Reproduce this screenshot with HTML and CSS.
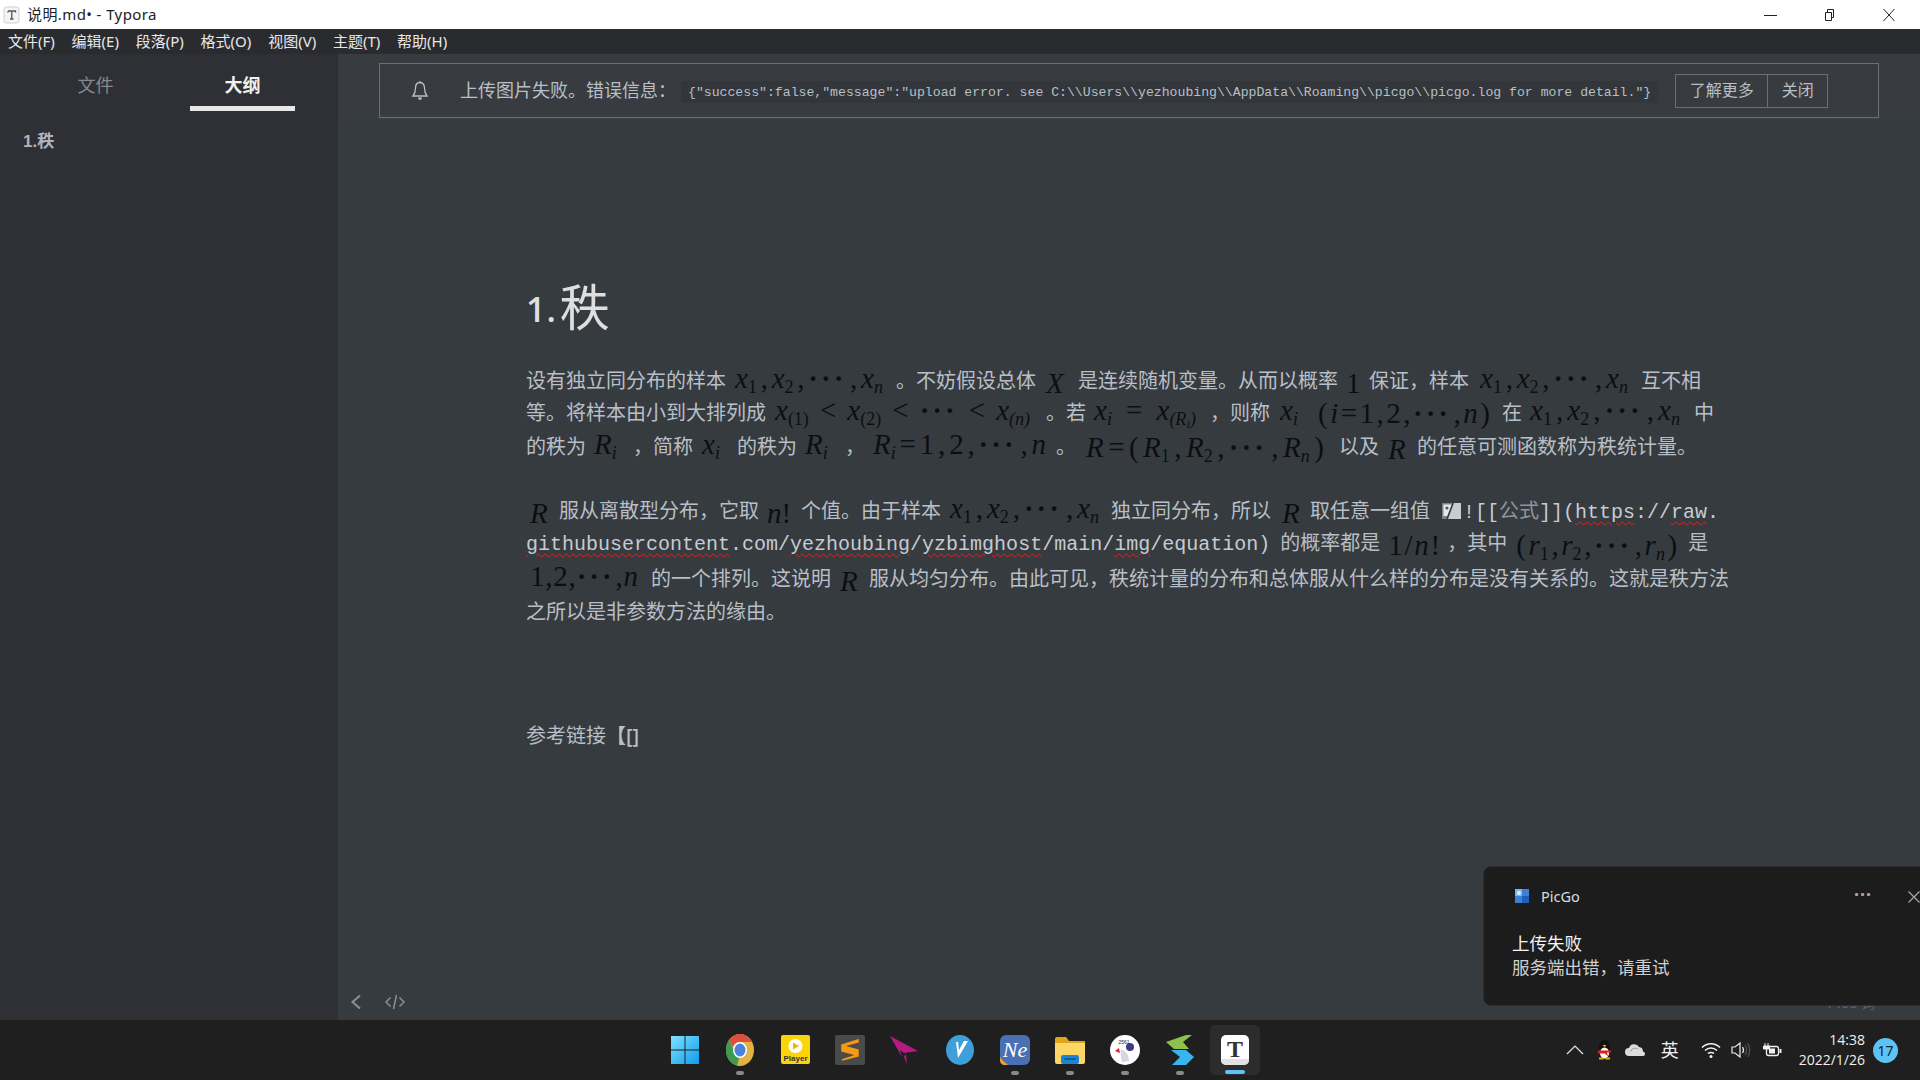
FILE: index.html
```html
<!DOCTYPE html>
<html lang="zh-CN">
<head>
<meta charset="utf-8">
<title>说明.md• - Typora</title>
<link rel="stylesheet" href="styles.css">
</head>
<body>
<div class="screen">
  <header class="titlebar">
    <svg class="appicon" width="18" height="18" viewBox="0 0 18 18"><rect x="1" y="1" width="15" height="16" rx="2.5" fill="#f4f4f4" stroke="#cfcfcf"/><path d="M5 5h7.5v1.5M8.8 5v8M7 13h3.5M5 6.500V5" fill="none" stroke="#555" stroke-width="1.300"/></svg>
    <span class="wintitle">说明.md• - Typora</span>
    <div class="winctl">
      <span class="ctl"><svg width="14" height="12" viewBox="0 0 14 12"><path d="M0 6.500h13" stroke="#222" stroke-width="1"/></svg></span>
      <span class="ctl ctl-max"><svg width="14" height="12" viewBox="0 0 14 12"><path d="M3.500 3.500h6v8h-6zM5.500 3.500V.5h6v8h-2" fill="none" stroke="#222" stroke-width="1"/></svg></span>
      <span class="ctl ctl-close"><svg width="14" height="12" viewBox="0 0 14 12"><path d="M1.500 0l11 12M12.500 0l-11 12" stroke="#222" stroke-width="1"/></svg></span>
    </div>
  </header>
  <nav class="menubar">
    <span>文件(F)</span><span>编辑(E)</span><span>段落(P)</span><span>格式(O)</span><span>视图(V)</span><span>主题(T)</span><span>帮助(H)</span>
  </nav>
  <div class="app">
    <aside class="sidebar">
      <div class="tabs"><span class="tab">文件</span><span class="tab tab-on">大纲</span></div>
      <div class="outline">1.秩</div>
    </aside>
    <main class="main">
      <div class="noticebar">
        <div class="notice">
          <svg class="bell" width="18" height="22" viewBox="0 0 18 22"><path d="M9 2.500c-3.500 0-4.500 3-4.500 5.500 0 4-1 6-2.500 8h14c-1.500-2-2.500-4-2.500-8 0-2.500-1-5.500-4.500-5.500zM9 1v1.500" fill="none" stroke="#b8bfc6" stroke-width="1.300"/><path d="M7 17.500h4c0 1.500-1 2.500-2 2.500s-2-1-2-2.500z" fill="#b8bfc6"/></svg>
          <span class="noticetext">上传图片失败。错误信息&#xFF1A;</span>
          <code class="noticecode">{"success":false,"message":"upload error. see C:\\Users\\yezhoubing\\AppData\\Roaming\\picgo\\picgo.log for more detail."}</code>
          <div class="btns"><span class="btn btn-more">了解更多</span><span class="btn btn-close">关闭</span></div>
        </div>
      </div>
      <article class="doc">
        <h1 class="h1"><span class="h1-num">1.</span><span class="h1-cjk">秩</span></h1>

        <div class="line h32">
          <span>设有独立同分布的样本</span>
          <span class="m g9 w148"><i>x<sub class="u">1</sub></i><span>,</span><i>x<sub class="u">2</sub></i><span>,</span><span class="dots">···</span><span>,</span><i>x<sub>n</sub></i></span>
          <span class="g13">。不妨假设总体</span>
          <span class="m g10 w19 drop"><i>X</i></span>
          <span class="g13">是连续随机变量。从而以概率</span>
          <span class="m g8 w13 drop"><span>1</span></span>
          <span class="g10">保证&#xFF0C;样本</span>
          <span class="m g11 w148"><i>x<sub class="u">1</sub></i><span>,</span><i>x<sub class="u">2</sub></i><span>,</span><span class="dots">···</span><span>,</span><i>x<sub>n</sub></i></span>
          <span class="g13">互不相</span>
        </div>
        <div class="line h33">
          <span>等。将样本由小到大排列成</span>
          <span class="m g9 w255"><i>x<sub class="u">(1)</sub></i><span>&lt;</span><i>x<sub class="u">(2)</sub></i><span>&lt;</span><span class="dots">···</span><span>&lt;</span><i>x<sub>(n)</sub></i></span>
          <span class="g16">。若</span>
          <span class="m g8 w102"><i>x<sub>i</sub></i><span>=</span><i>x<sub>(R<sub class="s2">i</sub>)</sub></i></span>
          <span class="g14">&#xFF0C;则称</span>
          <span class="m g10 w20"><i>x<sub>i</sub></i></span>
          <span class="m g18 w172 drop3"><span>(</span><i>i</i><span>=</span><span>1</span><span>,</span><span>2</span><span>,</span><span class="dots">···</span><span>,</span><i>n</i><span>)</span></span>
          <span class="g12">在</span>
          <span class="m g8 w150"><i>x<sub class="u">1</sub></i><span>,</span><i>x<sub class="u">2</sub></i><span>,</span><span class="dots">···</span><span>,</span><i>x<sub>n</sub></i></span>
          <span class="g14">中</span>
        </div>
        <div class="line h34">
          <span>的秩为</span>
          <span class="m g8 w27"><i>R<sub>i</sub></i></span>
          <span class="g12">&#xFF0C;简称</span>
          <span class="m g9 w21"><i>x<sub>i</sub></i></span>
          <span class="g14">的秩为</span>
          <span class="m g8 w26"><i>R<sub>i</sub></i></span>
          <span class="g14">&#xFF0C;</span>
          <span class="m g8 w173"><i>R<sub>i</sub></i><span>=</span><span>1</span><span>,</span><span>2</span><span>,</span><span class="dots">···</span><span>,</span><i>n</i></span>
          <span class="g10">。</span>
          <span class="m g10 w238 drop3"><i>R</i><span>=</span><span>(</span><i>R<sub class="u">1</sub></i><span>,</span><i>R<sub class="u">2</sub></i><span>,</span><span class="dots">···</span><span>,</span><i>R<sub>n</sub></i><span>)</span></span>
          <span class="g15">以及</span>
          <span class="m g9 w18 drop"><i>R</i></span>
          <span class="g11">的任意可测函数称为秩统计量。</span>
        </div>

        <div class="line h32 para">
          <span class="m g4 w19 drop"><i>R</i></span>
          <span class="g10">服从离散型分布&#xFF0C;它取</span>
          <span class="m g8 w22 drop"><i>n</i><span>!</span></span>
          <span class="g12">个值。由于样本</span>
          <span class="m g9 w149"><i>x<sub class="u">1</sub></i><span>,</span><i>x<sub class="u">2</sub></i><span>,</span><span class="dots">···</span><span>,</span><i>x<sub>n</sub></i></span>
          <span class="g12">独立同分布&#xFF0C;所以</span>
          <span class="m g11 w18 drop"><i>R</i></span>
          <span class="g10">取任意一组值</span>
          <svg class="g12 broken" width="19" height="16" viewBox="0 0 19 16"><path d="M0 0h19v16H0z" fill="#c9cdd1"/><path d="M12 0L6 16h-6V0z" fill="#7e8388"/><path d="M1.500 1.500h9L6 13H1.500z" fill="#e6e8ea"/><circle cx="5" cy="5" r="1.600" fill="#555"/><path d="M11 0L5 16" stroke="#363b40" stroke-width="1.500"/></svg>
          <span class="code g2">![[<span class="dim">公式</span>]](<span class="err">https</span>://<span class="err">raw</span>.</span>
        </div>
        <div class="line h31">
          <span class="code"><span class="err">githubusercontent</span>.com/<span class="err">yezhoubing</span>/<span class="err">yzbimghost</span>/main/<span class="err">img</span>/equation)</span>
          <span class="g10">的概率都是</span>
          <span class="m g8 w52 drop"><span>1</span><span>/</span><i>n</i><span>!</span></span>
          <span class="g7">&#xFF0C;其中</span>
          <span class="m g9 w161 drop"><span>(</span><i>r<sub class="u">1</sub></i><span>,</span><i>r<sub class="u">2</sub></i><span>,</span><span class="dots">···</span><span>,</span><i>r<sub>n</sub></i><span>)</span></span>
          <span class="g11">是</span>
        </div>
        <div class="line h42">
          <span class="m g4 w108"><span>1</span><span>,</span><span>2</span><span>,</span><span class="dots">···</span><span>,</span><i>n</i></span>
          <span class="g13">的一个排列。这说明</span>
          <span class="m g9 w20 drop"><i>R</i></span>
          <span class="g9">服从均匀分布。由此可见&#xFF0C;秩统计量的分布和总体服从什么样的分布是没有关系的。这就是秩方法</span>
        </div>
        <div class="line h24"><span>之所以是非参数方法的缘由。</span></div>

        <div class="line h32 refs"><span>参考链接</span><span class="cjkbr">【</span><span class="brackets">[]</span></div>
      </article>
      <footer class="statusbar">
        <svg width="14" height="16" viewBox="0 0 14 16"><path d="M11 1.500L3.500 8l7.500 6.500" fill="none" stroke="#8c9095" stroke-width="2"/></svg>
        <svg class="src" width="20" height="16" viewBox="0 0 20 16"><path d="M5.500 3.500L1 8l4.500 4.500M14.500 3.500L19 8l-4.500 4.500M11.500 1L8.500 15" fill="none" stroke="#8c9095" stroke-width="1.500"/></svg>
        <span class="count">1408 词</span>
      </footer>
    </main>
  </div>
  <div class="taskbar">
    <div class="tb-left"></div>
    <div class="tb-apps">
      <span class="tile"><svg width="30" height="30" viewBox="0 0 30 30"><defs><linearGradient id="wg" x1="0" y1="0" x2="1" y2="1"><stop offset="0" stop-color="#7fe3fb"/><stop offset="1" stop-color="#0f9bf0"/></linearGradient></defs><path fill="url(#wg)" d="M1 1h13.500v13.500H1zM15.500 1H29v13.500H15.500zM1 15.500h13.500V29H1zM15.500 15.500H29V29H15.500z"/></svg></span>
      <span class="tile run"><svg width="28" height="32" viewBox="0 0 28 32"><ellipse cx="14" cy="16" rx="14" ry="16" fill="#e3b341"/><path d="M14 0c5 0 10 3 12.500 8H14c-3.500 0-6 2-7 5L3 6c2.500-3.500 6.500-6 11-6z" fill="#d9503f"/><path d="M3 6l5.500 11c1 2.500 3 4 5.500 4l-3 10.500C4.500 30 0 24 0 16c0-4 1-7.500 3-10z" fill="#3c9a52"/><ellipse cx="14" cy="16" rx="7" ry="8" fill="#fff"/><ellipse cx="14" cy="16" rx="5.500" ry="6.500" fill="#4b82e0"/></svg></span>
      <span class="tile"><svg width="29" height="29" viewBox="0 0 29 29"><rect width="29" height="29" rx="2" fill="#fcd40a"/><circle cx="14.500" cy="11" r="7" fill="#fff"/><path d="M12 7.500l6 3.500-6 3.500z" fill="#f2b600"/><text x="14.500" y="26" font-size="8" font-weight="700" text-anchor="middle" fill="#333" font-family="Liberation Sans">Player</text></svg></span>
      <span class="tile"><svg width="30" height="30" viewBox="0 0 30 30"><rect width="30" height="30" rx="2" fill="#4a4a4a"/><path d="M23 5L7 10v6l15 4-15 5 16-4v-6L8 11l15-4z" fill="#f89a10" stroke="#f89a10" stroke-width="1.500"/></svg></span>
      <span class="tile"><svg width="30" height="30" viewBox="0 0 30 30"><path d="M0 1l28 15-14 2-4-3 2 7z" fill="#b61a7f"/><path d="M14 22l2-3 1 10z" fill="#b61a7f"/></svg></span>
      <span class="tile"><svg width="28" height="30" viewBox="0 0 28 30"><ellipse cx="14" cy="15" rx="14" ry="15" fill="#3e9fd9"/><path d="M10 7l2 16 10-17h-4l-5 9-1-8z" fill="#fff"/></svg></span>
      <span class="tile run"><svg width="30" height="30" viewBox="0 0 30 30"><rect width="30" height="30" rx="6" fill="#4a6fb2"/><path d="M0 22c2 3 5 6 8 8H5c-3 0-5-2-5-5z" fill="#f0a040"/><text x="15" y="22" font-size="22" font-style="italic" text-anchor="middle" fill="#fff" font-family="Liberation Serif">Ne</text></svg></span>
      <span class="tile run"><svg width="30" height="28" viewBox="0 0 30 28"><path d="M0 3a2 2 0 012-2h9l3 4h16v6H0z" fill="#e0a617"/><path d="M0 7h30v19a2 2 0 01-2 2H2a2 2 0 01-2-2z" fill="#fcd765"/><rect x="6" y="19" width="18" height="9" rx="2" fill="#1b86d4"/><path d="M9 23h12" stroke="#0d4f8a" stroke-width="1.500"/></svg></span>
      <span class="tile run"><svg width="30" height="30" viewBox="0 0 30 30"><ellipse cx="15" cy="15" rx="15" ry="15" fill="#fff"/><text x="14" y="9" font-size="5" text-anchor="middle" fill="#222" font-family="Liberation Sans">2561</text><circle cx="20" cy="12" r="4" fill="#3c3c82"/><path d="M5 16l4-3 1 5z" fill="#d22"/><path d="M11 14c3 2 8 4 8 12l-7 1c-1-5-2-8-1-13z" fill="#d6d6e4"/></svg></span>
      <span class="tile run"><svg width="28" height="30" viewBox="0 0 28 30"><path d="M20 0h6l-9 7 6 7H8L0 7z" fill="#8fc04e"/><path d="M5 15h15l8 7-8 8H6l8-8z" fill="#38b4ef"/></svg></span>
      <span class="tile tile-on"><svg width="28" height="30" viewBox="0 0 28 30"><rect width="28" height="30" rx="5" fill="#fff"/><path d="M0 24h28v1a5 5 0 01-5 5H5a5 5 0 01-5-5z" fill="#e2e2e2"/><text x="14" y="22" font-size="24" font-weight="700" text-anchor="middle" fill="#333" font-family="Liberation Serif">T</text></svg></span>
    </div>
    <div class="tray">
      <svg width="18" height="10" viewBox="0 0 18 10"><path d="M1 9l8-8 8 8" fill="none" stroke="#e8e8e8" stroke-width="1.200"/></svg>
      <svg class="t-qq" width="15" height="20" viewBox="0 0 15 20"><ellipse cx="7.500" cy="7" rx="5.500" ry="7" fill="#111"/><ellipse cx="7.500" cy="13" rx="4.500" ry="5.500" fill="#fff"/><path d="M1 10.500h13v2H10l1 4-3-3H1z" fill="#e01d1d"/><path d="M5.500 5.500l2 1.500 2-1.500-2-.8z" fill="#f2a900"/><path d="M2 18.500h4.500M8.500 18.500H13" stroke="#f2a900" stroke-width="1.800"/></svg>
      <svg class="t-cloud" width="20" height="12" viewBox="0 0 20 12"><path d="M4 12a4 4 0 010-8 5.500 5.500 0 0110-1 4.500 4.500 0 014 4.500A2.500 2.500 0 0120 10c0 1-.8 2-2 2z" fill="#dcdcdc"/><path d="M6 7.500a4 4 0 017-2" stroke="#9a9a9a" fill="none"/></svg>
      <span class="ime">英</span>
      <svg class="t-wifi" width="20" height="16" viewBox="0 0 20 16"><path d="M1 5.500c5-5 13-5 18 0M4 8.500c3.500-3.500 8.500-3.500 12 0M7 11.500c1.500-1.500 4.500-1.500 6 0" fill="none" stroke="#f0f0f0" stroke-width="1.500"/><circle cx="10" cy="14.500" r="1.500" fill="#f0f0f0"/></svg>
      <svg class="t-vol" width="20" height="18" viewBox="0 0 20 18"><path d="M1 6h3l5-4v14l-5-4H1z" fill="none" stroke="#ececec" stroke-width="1.200"/><path d="M11.500 6c1.200 1.800 1.200 4.200 0 6" fill="none" stroke="#ececec" stroke-width="1.200"/><path d="M14 4c2 3 2 7 0 10M16.500 2c3 4 3 10 0 14" fill="none" stroke="#555" stroke-width="1.200"/></svg>
      <svg class="t-bat" width="20" height="14" viewBox="0 0 20 14"><path d="M3 0v3M6 0v3M1.500 3h6v3h-6zM4.500 6v2" fill="#f0f0f0" stroke="#f0f0f0" stroke-width="1"/><rect x="4.500" y="3.500" width="12" height="9" rx="2" fill="none" stroke="#f0f0f0" stroke-width="1.300"/><rect x="7" y="5.500" width="6" height="5" fill="#f0f0f0"/><rect x="17.500" y="6" width="2" height="4" fill="#f0f0f0"/></svg>
      <div class="clock"><span>14:38</span><span>2022/1/26</span></div>
      <span class="badge">17</span>
    </div>
  </div>
  <aside class="toast">
    <div class="toast-head">
      <svg width="14" height="14" viewBox="0 0 14 14"><rect width="14" height="14" fill="#3f7fd6"/><path d="M0 0h7v7H0z" fill="#7ab6f2"/><path d="M7 7h7v7H7z" fill="#1f5fb8"/><circle cx="4" cy="4" r="2" fill="#dcefff"/></svg>
      <span class="toast-app">PicGo</span>
      <span class="toast-more">···</span>
      <svg class="toast-x" width="12" height="12" viewBox="0 0 12 12"><path d="M.5.500l11 11M11.500.500l-11 11" stroke="#a8a8a8" stroke-width="1.200"/></svg>
    </div>
    <div class="toast-title">上传失败</div>
    <div class="toast-body">服务端出错&#xFF0C;请重试</div>
  </aside>
</div>
</body>
</html>
```
FILE: styles.css
```css
* { box-sizing: border-box; }
html, body { margin: 0; padding: 0; }
body { font-family: "Noto Sans", "Noto Sans CJK SC", sans-serif; background: #363b40; overflow: hidden; }
.screen { position: relative; width: 1920px; height: 1080px; display: flex; flex-direction: column; overflow: hidden; }

/* title bar */
.titlebar { height: 29px; background: #fff; display: flex; align-items: center; padding-left: 3px; color: #222; }
.appicon { flex: none; }
.wintitle { margin-left: 6px; font-size: 15px; letter-spacing: .4px; line-height: 29px; white-space: nowrap; }
.winctl { margin-left: auto; display: flex; height: 29px; }
.ctl { width: 58px; display: flex; align-items: center; justify-content: center; }
.ctl-max { width: 57px; }
.ctl-close { width: 63px; }

/* menu bar */
.menubar { height: 25px; background: #2a2b2f; display: flex; align-items: center; gap: 16.800px; padding-left: 8px; font-size: 15px; color: #e8e8e8; line-height: 25px; }

.app { flex: 1; display: flex; min-height: 0; }

/* sidebar */
.sidebar { width: 338px; flex: none; background: #2e3035; }
.tabs { display: flex; gap: 42px; padding-left: 43px; height: 57px; }
.tab { width: 105px; text-align: center; font-size: 18px; line-height: 63px; height: 57px; color: #85898e; }
.tab-on { color: #f0f0f0; font-weight: 700; border-bottom: 5px solid #e8e8e8; }
.outline { padding-left: 23px; margin-top: 19px; font-size: 17px; line-height: 24px; font-weight: 700; color: #b0b5bb; font-family: "Liberation Sans", "Noto Sans CJK SC", sans-serif; }

/* main */
.main { flex: 1; min-width: 0; display: flex; flex-direction: column; background: #363b40; }
.noticebar { height: 65px; padding: 9px 41px 0 41px; background: #383c41; border-bottom: 1px solid #3b4045; }
.notice { height: 55px; border: 1px solid #6c7076; display: flex; align-items: center; padding-left: 31px; }
.bell { flex: none; }
.noticetext { margin-left: 31px; margin-bottom: 4px; font-size: 18px; color: #b8bfc6; white-space: nowrap; width: 216px; }
.noticecode { margin-left: 5px; margin-top: 2px; height: 22px; padding: 1px 7px 0; background: #33373c; font-family: "Liberation Mono", monospace; font-size: 13.170px; line-height: 22px; color: #b8bfc6; white-space: nowrap; }
.btns { display: flex; margin-left: 17px; margin-top: 1px; }
.btn { height: 34px; border: 1px solid #6c7076; font-size: 16px; line-height: 31px; color: #b8bfc6; text-align: center; }
.btn-more { width: 93px; }
.btn-close { width: 61px; margin-left: -1px; }

/* document */
.doc { flex: 1; padding: 158px 0 0 188px; min-height: 0; color: #b8bfc6; font-size: 20px; font-family: "Open Sans", "Noto Sans CJK SC", sans-serif; white-space: nowrap; }
.h1 { margin: 0 0 28px; height: 60px; display: flex; align-items: baseline; line-height: 60px; font-weight: 400; color: #dedede; }
.h1-num { font-size: 34px; font-weight: 600; letter-spacing: 1px; transform: translateY(-4px); }
.h1-cjk { margin-left: 3px; font-size: 50px; font-weight: 400; }
.line { display: flex; align-items: baseline; }
.h24 { height: 24px; line-height: 24px; }
.h31 { height: 31px; line-height: 31px; }
.h32 { height: 32px; line-height: 32px; }
.h33 { height: 33px; line-height: 32px; }
.h34 { height: 34px; line-height: 34px; }
.h42 { height: 42px; line-height: 42px; }
.para { margin-top: 31px; }
.refs { margin-top: 96px; }
.cjkbr { font-weight: 700; }
.brackets { font-weight: 600; }

/* math */
.m { display: flex; justify-content: space-between; align-items: baseline; line-height: 0; font-family: "Liberation Serif", serif; font-size: 29px; color: #0c0e10; flex: none; }
.m i { font-style: italic; }
.m sub { font-size: 18px; vertical-align: -5px; line-height: 0; }
.m sub.u { font-style: normal; }
.m sub.s2 { font-size: 13px; vertical-align: -3px; }
.dots { letter-spacing: 3px; font-weight: 700; }
.drop { transform: translateY(5px); }
.drop3 { transform: translateY(3px); }
.g2 { margin-left: 2px; } .g4 { margin-left: 4px; } .g7 { margin-left: 7px; } .g8 { margin-left: 8px; }
.g9 { margin-left: 9px; } .g10 { margin-left: 10px; } .g11 { margin-left: 11px; } .g12 { margin-left: 12px; }
.g13 { margin-left: 13px; } .g14 { margin-left: 14px; } .g15 { margin-left: 15px; } .g16 { margin-left: 16px; } .g18 { margin-left: 18px; }
.w13 { width: 13px; } .w18 { width: 18px; } .w19 { width: 19px; } .w20 { width: 20px; } .w21 { width: 21px; } .w22 { width: 22px; }
.w26 { width: 26px; } .w27 { width: 27px; } .w52 { width: 52px; } .w102 { width: 102px; } .w108 { width: 108px; } .w148 { width: 148px; }
.w149 { width: 149px; } .w150 { width: 150px; } .w161 { width: 161px; } .w172 { width: 172px; } .w173 { width: 173px; } .w238 { width: 238px; } .w255 { width: 255px; }
.broken { flex: none; align-self: center; }
.code { font-family: "Liberation Mono", "Noto Sans CJK SC", monospace; color: #c6cbd0; }
.dim { color: #8f959b; }
.err { text-decoration: underline wavy #e02020 1px; text-underline-offset: 3px; }

/* status bar */
.statusbar { height: 36px; flex: none; display: flex; align-items: center; padding-left: 11px; }
.src { margin-left: 22px; }
.count { margin-left: auto; margin-right: 45px; font-size: 14px; color: #5f646a; }

/* taskbar */
.taskbar { height: 60px; flex: none; background: #1f1f1f; display: grid; grid-template-columns: 1fr auto 1fr; align-items: center; }
.tb-apps { display: flex; height: 60px; align-items: center; }
.tile { position: relative; width: 55px; height: 50px; margin-top: -1px; display: flex; align-items: center; justify-content: center; border-radius: 5px; }
.tile svg { display: block; }
.run::after, .tile-on::after { content: ""; position: absolute; left: 50%; bottom: 0; width: 8px; height: 4px; margin-left: -4px; border-radius: 2px; background: #8a8a8a; }
.tile-on { background: #2c2c2c; width: 50px; margin: -1px 3px 0 2px; }
.tile-on::after { width: 20px; margin-left: -10px; background: #5cc4f5; bottom: 1px; }
.tray { display: flex; align-items: center; justify-content: flex-end; padding-right: 22px; color: #f0f0f0; }
.t-qq { margin-left: 13px; }
.t-cloud { margin-left: 13px; }
.ime { margin-left: 16px; font-size: 18px; line-height: 24px; }
.t-wifi { margin-left: 22px; }
.t-vol { margin-left: 10px; }
.t-bat { margin-left: 11px; }
.clock { margin-left: 17px; display: flex; flex-direction: column; align-items: flex-end; font-size: 14px; line-height: 20px; color: #f0f0f0; font-family: "Open Sans", sans-serif; }
.badge { margin-left: 8px; width: 25px; height: 25px; border-radius: 50%; background: #5cc4f5; color: #12222c; font-size: 14px; line-height: 25px; text-align: center; }

/* toast */
.toast { position: absolute; left: 1483px; top: 866px; width: 460px; height: 140px; background: #1c1c1c; border: 1px solid #2d2f32; border-radius: 8px; padding: 20px 0 0 28px; color: #f2f2f2; }
.toast-head { display: flex; align-items: center; height: 18px; margin-left: 3px; }
.toast-app { margin-left: 12px; font-size: 14.500px; color: #dcdcdc; }
.toast-more { position: absolute; left: 370px; top: 18px; font-size: 18px; line-height: 18px; font-weight: 700; letter-spacing: 1px; color: #a8a8a8; }
.toast-x { position: absolute; left: 424px; top: 24px; }
.toast-title { margin-top: 26px; font-size: 17.500px; line-height: 24px; color: #f4f4f4; }
.toast-body { font-size: 17.500px; line-height: 24px; color: #d0d0d0; }
```
